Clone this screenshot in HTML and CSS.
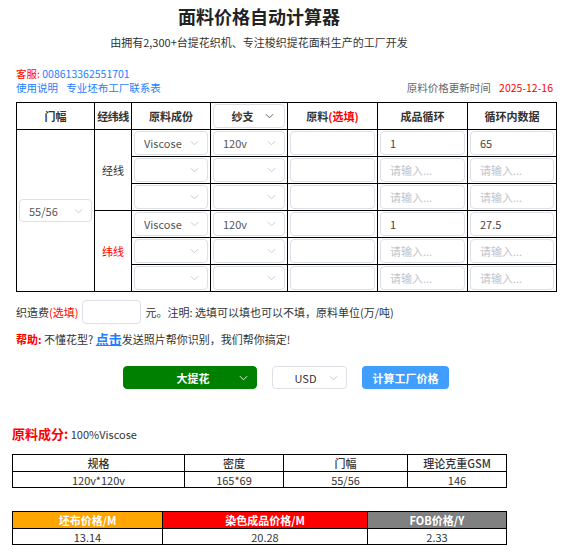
FILE: index.html
```html
<!DOCTYPE html>
<html lang="zh-CN">
<head>
    <meta charset="UTF-8">
    <meta name="viewport" content="width=device-width, initial-scale=1.0">
    <title>面料价格自动计算器</title>
    <link rel="stylesheet" href="styles.css">
</head>
<body>
    <div class="wrap">
        <div class="header">
            <h1>面料价格自动计算器</h1>
            <p class="sub">由拥有2,300+台提花织机、专注梭织提花面料生产的工厂开发</p>
        </div>

        <div class="calc">
            <div class="info">
                <div class="info-line"><span class="red">客服:</span> <span class="blue">008613362551701</span></div>
                <div class="info-line info-split">
                    <div class="links">
                        <a href="#" class="blue">使用说明</a>
                        <a href="#" class="blue">专业坯布工厂联系表</a>
                    </div>
                    <div class="update">原料价格更新时间 <span class="red">2025-12-16</span></div>
                </div>
            </div>

            <table class="grid">
                <colgroup>
                    <col style="width:78px">
                    <col style="width:37px">
                    <col style="width:79px">
                    <col style="width:77px">
                    <col style="width:90px">
                    <col style="width:90px">
                    <col style="width:89px">
                </colgroup>
                <thead>
                    <tr>
                        <th>门幅</th>
                        <th class="kind-head">经纬线</th>
                        <th>原料成份</th>
                        <th>
                            <div class="sel sel-head">
                                <span class="sel-text">纱支</span>
                                <svg class="chev" viewBox="0 0 10 6"><polyline points="1,1 5,5 9,1"/></svg>
                            </div>
                        </th>
                        <th>原料<span class="red">(选填)</span></th>
                        <th>成品循环</th>
                        <th>循环内数据</th>
                    </tr>
                </thead>
                <tbody>
                    <tr>
                        <td rowspan="6" class="width-cell">
                            <div class="sel sel-width">
                                <span class="sel-text">55/56</span>
                                <svg class="chev" viewBox="0 0 10 6"><polyline points="1,1 5,5 9,1"/></svg>
                            </div>
                        </td>
                        <td rowspan="3" class="kind">经线</td>
                        <td><div class="sel"><span class="sel-text">Viscose</span><svg class="chev" viewBox="0 0 10 6"><polyline points="1,1 5,5 9,1"/></svg></div></td>
                        <td><div class="sel"><span class="sel-text">120v</span><svg class="chev" viewBox="0 0 10 6"><polyline points="1,1 5,5 9,1"/></svg></div></td>
                        <td><input class="inp" type="text"></td>
                        <td><input class="inp" type="text" value="1"></td>
                        <td><input class="inp" type="text" value="65"></td>
                    </tr>
                    <tr>
                        <td><div class="sel"><span class="sel-text"></span><svg class="chev" viewBox="0 0 10 6"><polyline points="1,1 5,5 9,1"/></svg></div></td>
                        <td><div class="sel"><span class="sel-text"></span><svg class="chev" viewBox="0 0 10 6"><polyline points="1,1 5,5 9,1"/></svg></div></td>
                        <td><input class="inp" type="text"></td>
                        <td><input class="inp" type="text" placeholder="请输入..."></td>
                        <td><input class="inp" type="text" placeholder="请输入..."></td>
                    </tr>
                    <tr>
                        <td><div class="sel"><span class="sel-text"></span><svg class="chev" viewBox="0 0 10 6"><polyline points="1,1 5,5 9,1"/></svg></div></td>
                        <td><div class="sel"><span class="sel-text"></span><svg class="chev" viewBox="0 0 10 6"><polyline points="1,1 5,5 9,1"/></svg></div></td>
                        <td><input class="inp" type="text"></td>
                        <td><input class="inp" type="text" placeholder="请输入..."></td>
                        <td><input class="inp" type="text" placeholder="请输入..."></td>
                    </tr>
                    <tr>
                        <td rowspan="3" class="kind red">纬线</td>
                        <td><div class="sel"><span class="sel-text">Viscose</span><svg class="chev" viewBox="0 0 10 6"><polyline points="1,1 5,5 9,1"/></svg></div></td>
                        <td><div class="sel"><span class="sel-text">120v</span><svg class="chev" viewBox="0 0 10 6"><polyline points="1,1 5,5 9,1"/></svg></div></td>
                        <td><input class="inp" type="text"></td>
                        <td><input class="inp" type="text" value="1"></td>
                        <td><input class="inp" type="text" value="27.5"></td>
                    </tr>
                    <tr>
                        <td><div class="sel"><span class="sel-text"></span><svg class="chev" viewBox="0 0 10 6"><polyline points="1,1 5,5 9,1"/></svg></div></td>
                        <td><div class="sel"><span class="sel-text"></span><svg class="chev" viewBox="0 0 10 6"><polyline points="1,1 5,5 9,1"/></svg></div></td>
                        <td><input class="inp" type="text"></td>
                        <td><input class="inp" type="text" placeholder="请输入..."></td>
                        <td><input class="inp" type="text" placeholder="请输入..."></td>
                    </tr>
                    <tr>
                        <td><div class="sel"><span class="sel-text"></span><svg class="chev" viewBox="0 0 10 6"><polyline points="1,1 5,5 9,1"/></svg></div></td>
                        <td><div class="sel"><span class="sel-text"></span><svg class="chev" viewBox="0 0 10 6"><polyline points="1,1 5,5 9,1"/></svg></div></td>
                        <td><input class="inp" type="text"></td>
                        <td><input class="inp" type="text" placeholder="请输入..."></td>
                        <td><input class="inp" type="text" placeholder="请输入..."></td>
                    </tr>
                </tbody>
            </table>

            <div class="fee">
                <span>织造费<span class="red">(选填)</span></span>
                <input class="inp fee-inp" type="text">
                <span>元。注明: 选填可以填也可以不填，原料单位(万/吨)</span>
            </div>

            <div class="help">
                <b class="red">帮助:</b> 不懂花型? <a href="#" class="click">点击</a>发送照片帮你识别，我们帮你搞定!
            </div>

            <div class="actions">
                <div class="sel sel-type">
                    <span class="sel-text">大提花</span>
                    <svg class="chev" viewBox="0 0 10 6"><polyline points="1,1 5,5 9,1"/></svg>
                </div>
                <div class="sel sel-cur">
                    <span class="sel-text">USD</span>
                    <svg class="chev" viewBox="0 0 10 6"><polyline points="1,1 5,5 9,1"/></svg>
                </div>
                <button class="btn-calc">计算工厂价格</button>
            </div>
        </div>

        <div class="result">
            <div class="comp"><span class="comp-label">原料成分:</span> 100%Viscose</div>

            <table class="res res-spec">
                <colgroup>
                    <col style="width:172px">
                    <col style="width:99px">
                    <col style="width:124px">
                    <col style="width:99px">
                </colgroup>
                <tr><th>规格</th><th>密度</th><th>门幅</th><th>理论克重GSM</th></tr>
                <tr><td>120v*120v</td><td>165*69</td><td>55/56</td><td>146</td></tr>
            </table>

            <table class="res res-price">
                <colgroup>
                    <col style="width:150px">
                    <col style="width:205px">
                    <col style="width:139px">
                </colgroup>
                <tr><th class="bg-orange">坯布价格/M</th><th class="bg-red">染色成品价格/M</th><th class="bg-gray">FOB价格/Y</th></tr>
                <tr><td>13.14</td><td>20.28</td><td>2.33</td></tr>
            </table>
        </div>
    </div>
</body>
</html>
```

FILE: styles.css
```css
* {
    margin: 0;
    padding: 0;
    box-sizing: border-box;
}

body {
    font-family: "Noto Sans CJK SC", "Noto Sans", sans-serif;
    font-size: 11px;
    color: #333;
    background: #fff;
}

a {
    text-decoration: none;
}

.red {
    color: #f00;
}

.blue {
    color: #1e80ff;
}

.wrap {
    width: 494px;
    margin-left: 12px;
}

.header {
    text-align: center;
    padding-top: 4px;
}

.header h1 {
    font-size: 18px;
    line-height: 24px;
    color: #222;
}

.sub {
    font-size: 11px;
    line-height: 16px;
    margin-top: 6px;
    color: #333;
}

.calc {
    width: 540px;
    margin-left: 4px;
}

.info {
    margin-top: 17px;
    font-size: 10.5px;
}

.info-line {
    line-height: 14px;
}

.info-split {
    display: flex;
    justify-content: space-between;
    padding-right: 3px;
}

.links a + a {
    margin-left: 6px;
}

.update {
    color: #666;
}

.update .red {
    margin-left: 6px;
}

.grid {
    margin-top: 7px;
    width: 540px;
    table-layout: fixed;
    border-collapse: collapse;
}

.grid th,
.grid td {
    border: 1px solid #000;
    padding: 1px 2px;
    height: 27px;
    text-align: center;
    vertical-align: middle;
    font-size: 11px;
    line-height: 14px;
}

.grid th {
    font-weight: bold;
    color: #333;
}

.grid .kind-head {
    padding: 0;
    white-space: nowrap;
    letter-spacing: -0.5px;
}

.grid .kind {
    padding: 0;
    color: #333;
}

.grid .kind.red {
    color: #f00;
}

.sel {
    display: flex;
    align-items: center;
    height: 24px;
    border: 1px solid #dcdfe6;
    border-radius: 4px;
    background: #fff;
    padding: 0 8px 0 9px;
    color: #555;
}

.sel-text {
    flex: 1;
    text-align: left;
    white-space: nowrap;
}

.chev {
    width: 9px;
    height: 6px;
    fill: none;
    stroke: #c0c4cc;
    stroke-width: 1;
}

.sel-head {
    padding: 0 10px 0 12px;
}

.sel-head .sel-text {
    text-align: center;
    font-weight: bold;
    color: #333;
}

.sel-head .chev {
    stroke: #555;
    margin-left: 6px;
}

.width-cell .sel-width {
    height: 23px;
}

.inp {
    display: block;
    width: 100%;
    height: 24px;
    border: 1px solid #dcdfe6;
    border-radius: 4px;
    padding: 0 9px;
    font-family: inherit;
    font-size: 11px;
    color: #444;
    outline: none;
}

.inp::placeholder {
    color: #c0c4cc;
}

.fee {
    display: flex;
    align-items: center;
    margin-top: 8px;
    height: 24px;
}

.fee-inp {
    width: 59px;
    margin: 0 4px;
}

.help {
    margin-top: 6px;
    line-height: 18px;
}

.help .red {
    font-weight: bold;
}

.click {
    color: #1e80ff;
    font-weight: bold;
    font-size: 13px;
    text-decoration: underline;
}

.actions {
    display: flex;
    justify-content: center;
    align-items: center;
    gap: 15px;
    margin-top: 18px;
    height: 23px;
}

.sel-type {
    width: 134px;
    height: 23px;
    background: #008000;
    border-color: #008000;
    color: #fff;
    font-weight: bold;
    font-size: 11px;
}

.sel-type .sel-text {
    text-align: center;
    padding-left: 14px;
}

.sel-type .chev {
    stroke: #fff;
}

.sel-cur {
    width: 75px;
    height: 23px;
    color: #333;
}

.sel-cur .sel-text {
    text-align: center;
}

.btn-calc {
    width: 87px;
    height: 23px;
    border: none;
    border-radius: 4px;
    background: #409eff;
    color: #fff;
    font-family: inherit;
    font-size: 11px;
    font-weight: bold;
}

.result {
    margin-top: 36px;
}

.comp {
    line-height: 18px;
    font-size: 11px;
}

.comp-label {
    color: #f00;
    font-weight: bold;
    font-size: 13px;
}

.res {
    width: 494px;
    table-layout: fixed;
    border-collapse: collapse;
    text-align: center;
}

.res th,
.res td {
    border: 1px solid #000;
    padding: 0;
    font-size: 11px;
    line-height: 14px;
}

.res th {
    height: 17px;
    font-weight: 500;
}

.res td {
    height: 16px;
}

.res-spec {
    margin-top: 11px;
}

.res-price {
    margin-top: 23px;
}

.res-price th {
    color: #fff;
    font-weight: bold;
}

.bg-orange {
    background: #ffa500;
}

.bg-red {
    background: #f00;
}

.bg-gray {
    background: #808080;
}
```
